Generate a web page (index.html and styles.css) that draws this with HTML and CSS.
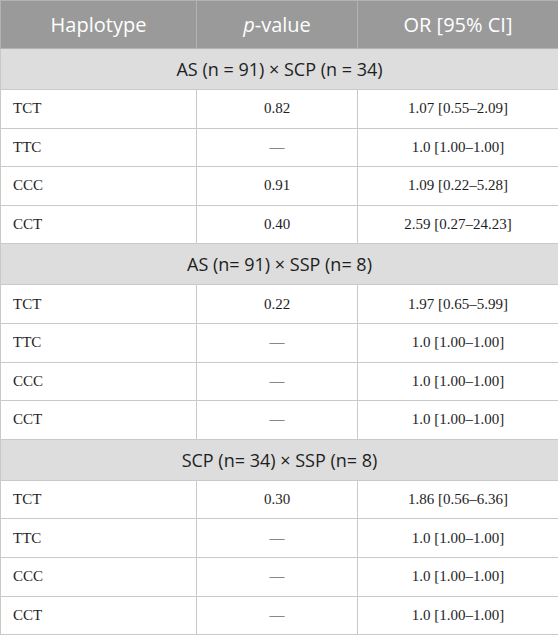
FILE: index.html
```html
<!DOCTYPE html>
<html>
<head>
<meta charset="utf-8">
<link rel="stylesheet" href="styles.css">
</head>
<body>
<table class="hap">
  <colgroup>
    <col class="c1"><col class="c2"><col class="c3">
  </colgroup>
  <thead>
    <tr><th>Haplotype</th><th><i>p</i>-value</th><th>OR [95% CI]</th></tr>
  </thead>
  <tbody>
    <tr class="sec"><td colspan="3">AS (n = 91) × SCP (n = 34)</td></tr>
    <tr><td>TCT</td><td>0.82</td><td>1.07 [0.55–2.09]</td></tr>
    <tr><td>TTC</td><td>—</td><td>1.0 [1.00–1.00]</td></tr>
    <tr><td>CCC</td><td>0.91</td><td>1.09 [0.22–5.28]</td></tr>
    <tr><td>CCT</td><td>0.40</td><td>2.59 [0.27–24.23]</td></tr>
    <tr class="sec"><td colspan="3">AS (n= 91) × SSP (n= 8)</td></tr>
    <tr><td>TCT</td><td>0.22</td><td>1.97 [0.65–5.99]</td></tr>
    <tr><td>TTC</td><td>—</td><td>1.0 [1.00–1.00]</td></tr>
    <tr><td>CCC</td><td>—</td><td>1.0 [1.00–1.00]</td></tr>
    <tr><td>CCT</td><td>—</td><td>1.0 [1.00–1.00]</td></tr>
    <tr class="sec"><td colspan="3">SCP (n= 34) × SSP (n= 8)</td></tr>
    <tr><td>TCT</td><td>0.30</td><td>1.86 [0.56–6.36]</td></tr>
    <tr><td>TTC</td><td>—</td><td>1.0 [1.00–1.00]</td></tr>
    <tr><td>CCC</td><td>—</td><td>1.0 [1.00–1.00]</td></tr>
    <tr><td>CCT</td><td>—</td><td>1.0 [1.00–1.00]</td></tr>
  </tbody>
</table>
</body>
</html>
```

FILE: styles.css
```css
html, body {
  margin: 0;
  padding: 0;
  background: #fff;
}
.hap {
  border-collapse: collapse;
  width: 558px;
  table-layout: fixed;
}
.c1 { width: 196px; }
.c2 { width: 161px; }
.c3 { width: 201px; }
.hap th, .hap td {
  border: 1px solid #c9c9c9;
  padding: 0;
}
.hap th {
  background: #9a9a9a;
  color: #fff;
  font-family: "Open Sans", sans-serif;
  font-weight: normal;
  font-size: 20px;
  height: 47px;
  text-align: center;
  border-color: #b3b3b3;
}
.hap td {
  font-family: "Liberation Serif", serif;
  font-size: 15px;
  color: #1e1e1e;
  height: 37.6px;
  text-align: center;
}
.hap td:first-child {
  text-align: left;
  padding-left: 12px;
}
.hap .sec td {
  background: #dcdddc;
  font-family: "Open Sans", sans-serif;
  font-size: 18px;
  color: #1e1e1e;
  text-align: center;
  padding-left: 0;
  height: 40px;
}
```
